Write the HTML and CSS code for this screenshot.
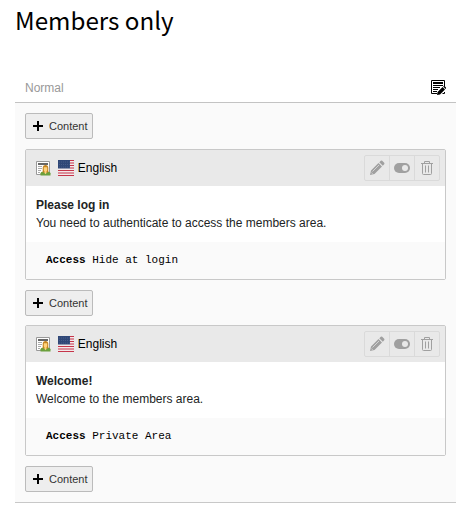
FILE: index.html
```html
<!DOCTYPE html>
<html lang="en">
<head>
<meta charset="utf-8">
<title>Members only</title>
<link rel="stylesheet" href="styles.css">
</head>
<body>
<svg class="symbols" aria-hidden="true">
  <symbol id="plus" viewBox="0 0 10 10"><path d="M4 0h2v4h4v2H6v4H4V6H0V4h4z" fill="#000"/></symbol>
  <symbol id="record" viewBox="0 0 16 16">
    <path d="M.5 1.500h13v13H.5z" fill="#fff" stroke="#999"/>
    <path d="M2 3h10v2H2z" fill="#666"/>
    <path d="M2 6.500h4M2 8.500h4M2 10.500h3M2 12.500h2" stroke="#aaa"/>
    <path d="M4.500 15.500v-2.200c0-1.200 1.300-1.600 3-1.900h4c1.700.3 3 .7 3 1.900v2.200z" fill="#6ba03c"/>
    <path d="M6.700 8c0-1.900 1.100-3 2.800-3s2.800 1.100 2.800 3v4.500H6.700z" fill="#c58420"/>
    <path d="M7.800 7.300h3.400v3l-.7 1.200v1.500l-1 1.300-1-1.300v-1.500l-.7-1.200z" fill="#ffd27c"/>
  </symbol>
  <symbol id="flag" viewBox="0 0 16 16">
    <path d="M0 0h16v16H0z" fill="#f3e9ea"/>
    <path d="M12 .5h4M12 3h4M12 5.500h4M12 8h4M0 10.500h16M0 13h16M0 15.500h16" stroke="#c5354a" stroke-width="1.200"/>
    <path d="M0 0h12v8.500H0z" fill="#2f4777"/>
    <path d="M1 2h11M1 4.500h11M1 7h11" stroke="#506690" stroke-width=".7" stroke-dasharray="1 1"/>
  </symbol>
  <symbol id="pencil" viewBox="0 0 16 16">
    <path d="M1 15l1-4.500L9.500 3 13 6.500 5.500 14zM10.300 2.200l1.500-1.500q.7-.5 1.400.1l2 2q.6.700 0 1.400l-1.400 1.500z" fill="#a0a0a0"/>
    <path d="M3.500 11.500l6.500-6.500M2.300 12.500l1.300 1.300" stroke="#e9e9e9" stroke-width=".7"/>
  </symbol>
  <symbol id="toggle" viewBox="0 0 16 16">
    <rect y="3" width="16" height="10" rx="5" fill="#a0a0a0"/><circle cx="11" cy="8" r="3" fill="#e9e9e9"/>
  </symbol>
  <symbol id="trash" viewBox="0 0 16 16">
    <path d="M2 3.500h12M5.500 3.500v-2h5v2M3.500 4v9.500q0 1 1 1h7q1 0 1-1V4M6.500 5.500v7M9.500 5.500v7" fill="none" stroke="#a0a0a0"/>
  </symbol>
</svg>
<main class="page">
  <h1 class="title">Members only</h1>
  <section class="column">
    <header class="column-header">
      <span>Normal</span>
      <svg class="icon" viewBox="0 1 16 16">
        <path d="M14.500 7V1.500h-13v13H7M12.500 14.500h2V13" fill="none" stroke="#000"/>
        <path d="M3 3h10v2H3z"/>
        <path d="M3 6.500h10M3 8.500h7M3 10.500h5M3 12.500h4" stroke="#000"/>
        <path d="M7 16l.6-3 5-5 2.400 2.400-5 5zM13.200 7.400l.9-.9L16 8.500v1l-.5.500z"/>
      </svg>
    </header>
    <div class="column-body">
      <button class="new-content"><svg class="plus"><use href="#plus"/></svg>Content</button>
      <article class="element">
        <header class="element-header">
          <svg class="icon"><use href="#record"/></svg>
          <svg class="icon flag"><use href="#flag"/></svg>
          <span class="language">English</span>
          <div class="actions">
            <span class="action"><svg class="icon"><use href="#pencil"/></svg></span>
            <span class="action"><svg class="icon"><use href="#toggle"/></svg></span>
            <span class="action"><svg class="icon"><use href="#trash"/></svg></span>
          </div>
        </header>
        <div class="element-body"><strong>Please log in</strong><br>You need to authenticate to access the members area.</div>
        <footer class="element-footer"><strong>Access</strong> Hide at login</footer>
      </article>
      <button class="new-content"><svg class="plus"><use href="#plus"/></svg>Content</button>
      <article class="element element-last">
        <header class="element-header">
          <svg class="icon"><use href="#record"/></svg>
          <svg class="icon flag"><use href="#flag"/></svg>
          <span class="language">English</span>
          <div class="actions">
            <span class="action"><svg class="icon"><use href="#pencil"/></svg></span>
            <span class="action"><svg class="icon"><use href="#toggle"/></svg></span>
            <span class="action"><svg class="icon"><use href="#trash"/></svg></span>
          </div>
        </header>
        <div class="element-body"><strong>Welcome!</strong><br>Welcome to the members area.</div>
        <footer class="element-footer"><strong>Access</strong> Private Area</footer>
      </article>
      <button class="new-content"><svg class="plus"><use href="#plus"/></svg>Content</button>
    </div>
  </section>
</main>
</body>
</html>
```
FILE: styles.css
```css
* { box-sizing: border-box; }
body {
  margin: 0;
  background: #fff;
  color: #212424;
  font: 12px/18px "Liberation Sans", Arial, sans-serif;
}
svg { display: block; flex: none; }
.symbols { display: none; }
.icon { width: 16px; height: 16px; }
.page { width: 456px; padding: 3px 0 0 15px; }
.title {
  margin: 0;
  height: 70px;
  color: #000;
  font: 400 24.2px/33px "Noto Sans CJK SC", sans-serif;
  white-space: nowrap;
}
.column-header {
  display: flex;
  justify-content: space-between;
  align-items: center;
  height: 30px;
  padding: 0 10px;
  border-bottom: 1px solid #c3c3c3;
  color: #999;
}
.column-body {
  display: flex;
  flex-direction: column;
  align-items: flex-start;
  gap: 10px;
  height: 400px;
  padding: 10px;
  background: #fafafa;
  border-bottom: 1px solid #c8c8c8;
}
.new-content {
  display: flex;
  align-items: center;
  gap: 6px;
  width: 68px;
  height: 26px;
  margin: 0;
  padding: 0 0 0 7px;
  border: 1px solid #bbb;
  border-radius: 2px;
  background: #eee;
  color: #333;
  font: 11px/16px "Liberation Sans", Arial, sans-serif;
}
.plus { width: 10px; height: 10px; }
.element {
  width: 100%;
  height: 131px;
  border: 1px solid #c8c8c8;
  border-radius: 2px;
  background: #fff;
}
.element-last { margin-top: -1px; }
.element-header {
  display: flex;
  align-items: center;
  height: 36px;
  padding: 0 5px 0 10px;
  background: #e9e9e9;
  color: #000;
}
.flag { margin-left: 6px; }
.language { margin-left: 3.800px; }
.actions {
  display: flex;
  width: 76px;
  height: 26px;
  margin-left: auto;
  border: 1px solid #dadada;
  border-radius: 2px;
}
.action {
  display: flex;
  align-items: center;
  justify-content: center;
  width: 24px;
}
.action + .action { width: 25px; border-left: 1px solid #dadada; }
.element-body { height: 56px; padding: 10px; }
.element-footer {
  height: 37px;
  padding: 10px 20px;
  background: #fafafa;
  color: #000;
  font: 11px/16px "Liberation Mono", monospace;
}
```
